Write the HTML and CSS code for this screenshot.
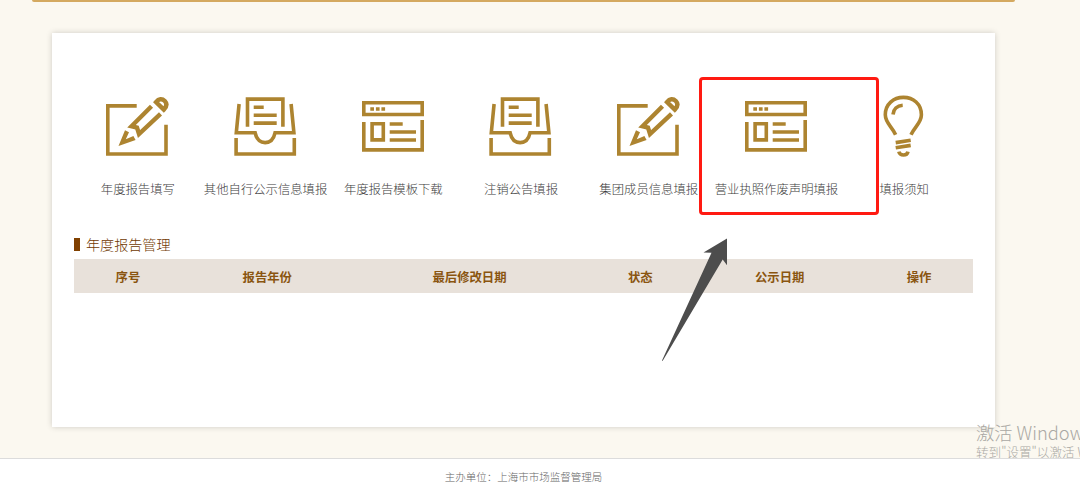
FILE: index.html
```html
<!DOCTYPE html>
<html lang="zh-CN">
<head>
    <meta charset="UTF-8">
    <meta name="viewport" content="width=device-width, initial-scale=1.0">
    <title>年度报告管理</title>
    <link rel="stylesheet" href="styles.css">
</head>
<body>
    <!-- shared icons -->
    <svg class="sprite" width="0" height="0">
        <symbol id="icon-edit" viewBox="0.8 0 64 64">
            <path d="M31.5 10.9H2.6V59H60.8V29.7"/>
            <path class="bold" d="M46.3 11.2L26.3 31.2L31.8 32.6L33.8 39L55.3 18.8"/>
            <path class="bold" d="M50.8 7C53.5 3.5 57 3.4 59.6 6C62 8.6 61.6 11.6 58.6 14.6Z"/>
            <path class="solid" d="M13.3 51L19.8 35.3L23.8 37.3L20.6 44.2L28.2 41L30.4 45Z"/>
        </symbol>
        <symbol id="icon-tray" viewBox="0.5 0 64 64">
            <path d="M14 31.7V4.1H49.4V31.7"/>
            <path d="M20.2 12.3H30.2M20.2 20.2H43.2M20.2 28.1H43.2"/>
            <path d="M5.6 9L2.8 37.7H21.6C23 44.5 26.5 47.6 31.6 47.6C36.7 47.6 40.2 44.5 41.6 37.7H60.4L57.6 9"/>
            <path d="M2.6 43V59H60.8V43"/>
        </symbol>
        <symbol id="icon-page" viewBox="0 0 64 64">
            <path d="M2.8 7.8H61.2V19.5H2.8Z"/>
            <path d="M9.3 14H13M14.9 14H18.6M20.4 14H24.1"/>
            <path d="M2.8 27V54.9H61.2V25"/>
            <path d="M11.1 28.8H22.3V44.9H11.1Z"/>
            <path d="M28.7 29H41.7M28.7 37H55M28.7 45H55"/>
        </symbol>
        <symbol id="icon-bulb" viewBox="0 0 64 64">
            <path d="M23.6 39.8C20 31.5 13.3 28 13.3 19.8C13.3 9 21.5 2.4 31.4 2.4C41.3 2.4 49.4 9 49.4 19.8C49.4 28 42.6 31.5 39 39.8"/>
            <path d="M21 19.5C21.4 14.5 25 10.6 30.7 10.2"/>
            <path d="M23.7 47.6L38.7 45.2M23.7 52.8L38.7 50.4"/>
            <path d="M26.8 56.6C28 61.2 35 61.2 36 56.6"/>
        </symbol>
    </svg>

    <main>
        <div class="banner"></div>
        <div class="panel">
            <ul class="menu">
                <li><svg><use href="#icon-edit"/></svg><span>年度报告填写</span></li>
                <li><svg><use href="#icon-tray"/></svg><span>其他自行公示信息填报</span></li>
                <li><svg><use href="#icon-page"/></svg><span>年度报告模板下载</span></li>
                <li><svg><use href="#icon-tray"/></svg><span>注销公告填报</span></li>
                <li><svg><use href="#icon-edit"/></svg><span>集团成员信息填报</span></li>
                <li><svg><use href="#icon-page"/></svg><span>营业执照作废声明填报</span></li>
                <li><svg><use href="#icon-bulb"/></svg><span>填报须知</span></li>
            </ul>
            <h2>年度报告管理</h2>
            <table>
                <colgroup>
                    <col class="narrow"><col class="medium"><col class="wide">
                    <col class="narrow"><col class="medium"><col class="narrow">
                </colgroup>
                <tr>
                    <th>序号</th>
                    <th>报告年份</th>
                    <th>最后修改日期</th>
                    <th>状态</th>
                    <th>公示日期</th>
                    <th>操作</th>
                </tr>
            </table>
            <div class="highlight"></div>
            <svg class="arrow" viewBox="0 0 68 124">
                <path d="M66 0.5L42.5 14.5L50.5 14.8L1 122.5L1.6 123L61.7 21.5L66 27.3Z"/>
            </svg>
        </div>
        <div class="watermark">
            <p class="title">激活 Windows</p>
            <p>转到"设置"以激活 Windows。</p>
        </div>
    </main>
    <footer>主办单位：上海市市场监督管理局</footer>
</body>
</html>
```
FILE: styles.css
```css
* {
    box-sizing: border-box;
}
body {
    margin: 0;
    height: 487px;
    overflow: hidden;
    display: flex;
    flex-direction: column;
    font-family: "Noto Sans CJK SC", sans-serif;
    font-size: 12.35px;
    font-weight: 300;
    color: #3c3c3c;
    background-color: #fff;
}
.sprite {
    position: absolute;
}
main {
    position: relative;
    height: 459px;
    overflow: hidden;
    background-color: #fbf8f0;
    border-bottom: 1px solid #dcdcdc;
}
.banner {
    width: 983px;
    height: 2px;
    margin-left: 32px;
    background-color: #d4a960;
    border-radius: 0 0 3px 3px;
}
.panel {
    position: relative;
    width: 943px;
    height: 394px;
    margin: 31px 0 0 52px;
    padding: 62px 22px 0;
    background-color: #fff;
    box-shadow: 0 0 6px rgba(0,0,0,0.18);
}
.menu {
    display: flex;
    width: 894px;
    margin: 0;
    padding: 0;
    list-style: none;
}
.menu li {
    flex: 1;
    display: flex;
    flex-direction: column;
    align-items: center;
    white-space: nowrap;
}
.menu svg {
    width: 64px;
    height: 64px;
    fill: none;
    stroke: #ad8430;
    stroke-width: 3.6;
}
.menu span {
    margin-top: 20px;
    line-height: 20px;
}
.bold {
    stroke-width: 4.4;
}
.solid {
    fill: #ad8430;
    stroke: none;
}
h2 {
    display: flex;
    align-items: center;
    margin: 35px 0 5px;
    font-size: 14.1px;
    font-weight: 300;
    line-height: 20px;
    color: #703800;
}
h2::before {
    content: "";
    width: 6px;
    height: 13px;
    margin-right: 6px;
    background-color: #804000;
}
table {
    width: 899px;
    table-layout: fixed;
    border-collapse: collapse;
    background-color: #e8e1da;
}
th {
    height: 34px;
    padding: 2px 0 0;
    font-weight: bold;
    color: #8a5510;
}
.narrow {
    width: 12%;
}
.medium {
    width: 19%;
}
.wide {
    width: 26%;
}
.highlight {
    position: absolute;
    left: 647px;
    top: 44px;
    width: 180px;
    height: 138px;
    border: 3px solid #ff1a12;
    border-radius: 4px;
}
.arrow {
    position: absolute;
    left: 609px;
    top: 205px;
    width: 68px;
    height: 124px;
    fill: #4d4d4d;
}
.watermark {
    position: absolute;
    left: 976px;
    top: 421px;
    font-size: 12.6px;
    line-height: 16px;
    white-space: nowrap;
    color: #aaa8a4;
}
.watermark p {
    margin: 0;
}
.watermark .title {
    font-size: 18.3px;
    line-height: 23px;
}
footer {
    padding: 8px 33px 0 0;
    font-size: 10.5px;
    line-height: 20px;
    text-align: center;
    color: #666;
}
```
